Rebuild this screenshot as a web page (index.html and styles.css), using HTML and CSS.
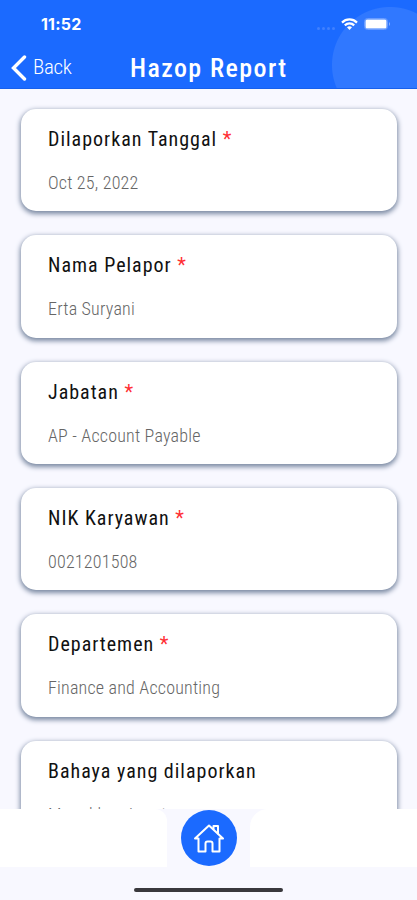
FILE: index.html
```html
<!DOCTYPE html>
<html lang="id">
<head>
<meta charset="utf-8">
<title>Hazop Report</title>
<link rel="stylesheet" href="styles.css">
</head>
<body>
<div class="screen">
  <header class="header">
    <div class="status">
      <span class="time">11:52</span>
      <span class="status-icons">
        <span class="signal"><i></i><i></i><i></i><i></i></span>
        <svg class="wifi" width="17" height="13" viewBox="0 0 17 13" fill="none" stroke="#fff" stroke-width="2.2"><path d="M1 4.6C5.2.4 11.8.4 16 4.6M3.8 7.4c2.7-2.7 6.7-2.7 9.4 0"/><path d="M6 9.3c1.4-1.3 3.6-1.3 5 0L8.500 12z" fill="#fff" stroke="none"/></svg>
        <svg class="battery" width="27" height="12" viewBox="0 0 27 12"><rect x=".5" y=".5" width="23" height="11" rx="3" fill="none" stroke="#6a9cff"/><rect x="1.500" y="1.500" width="21" height="9" rx="1.500" fill="#fff"/><path d="M25 4q2 2 0 4z" fill="#8db2ff"/></svg>
      </span>
    </div>
    <div class="nav">
      <a class="back"><svg width="16" height="26" viewBox="0 0 16 26" fill="none" stroke="#fff" stroke-width="3.4" stroke-linecap="round"><path d="M13.500 2 2.500 13l11 11"/></svg><span class="back-label">Back</span></a>
      <h1 class="title">Hazop Report</h1>
    </div>
  </header>
  <main class="list">
    <section class="card"><h2>Dilaporkan Tanggal <b>*</b></h2><p>Oct 25, 2022</p></section>
    <section class="card"><h2>Nama Pelapor <b>*</b></h2><p>Erta Suryani</p></section>
    <section class="card"><h2>Jabatan <b>*</b></h2><p>AP - Account Payable</p></section>
    <section class="card"><h2>NIK Karyawan <b>*</b></h2><p>0021201508</p></section>
    <section class="card"><h2>Departemen <b>*</b></h2><p>Finance and Accounting</p></section>
    <section class="card"><h2>Bahaya yang dilaporkan</h2><p class="entry">Masukkan input</p></section>
  </main>
  <footer class="tabbar">
    <div class="panel left"></div>
    <a class="home"><svg width="30" height="29" viewBox="0 0 30 29" fill="none" stroke="#fff" stroke-width="2" stroke-linejoin="round" stroke-linecap="round"><path d="M1 14.500 15 1.500l14 13h-3.500V27.500h-7v-8q0-2-2-2h-3q-2 0-2 2v8h-7v-13z"/><path d="M19.500 5V2H24v7.500"/></svg></a>
    <div class="panel right"></div>
    <div class="indicator"></div>
  </footer>
</div>
</body>
</html>
```
FILE: styles.css
```css
* { box-sizing: border-box; }
body { margin: 0; font-family: "Roboto Condensed", Roboto, sans-serif; font-stretch: 75%; }
.screen { width: 417px; height: 900px; display: flex; flex-direction: column; overflow: hidden; background: #f8f8ff; }
.header { flex: 0 0 89px; background: radial-gradient(circle at 390px 65px, #3078ff 57.5px, transparent 58.5px) #1b6aff; color: #fff; border-bottom: 1px solid #1760ec; }
.status { height: 48px; display: flex; justify-content: space-between; padding: 0 26px 0 41px; align-items: center; }
.time { font: 700 16px/20px Inter, sans-serif; letter-spacing: .2px; }
.status-icons { display: flex; align-items: center; }
.signal { display: flex; gap: 2px; margin: 8px 6px 0 0; }
.signal i { width: 3px; height: 3px; border-radius: 50%; background: #4080ff; }
.battery { margin-left: 6px; }
.nav { height: 40px; display: grid; grid-template-columns: 130px 1fr; align-items: center; }
.back { display: flex; align-items: center; padding-left: 11px; gap: 6px; }
.back-label { font-size: 21px; font-weight: 300; letter-spacing: -.3px; position: relative; top: -1px; }
.title { margin: 0; font-size: 26px; font-weight: 500; letter-spacing: 1.4px; line-height: 40px; }
.list { flex: 0 0 720px; overflow: hidden; padding: 20px 20px 0 21px; display: flex; flex-direction: column; gap: 24px; }
.card { flex: 0 0 102.35px; height: 102.35px; background: #fff; border-radius: 15px; padding: 17px 27px 0; box-shadow: 0 2px 5px 1px #7b8aa3; }
.card h2 { margin: 0; font-size: 20px; line-height: 26px; font-weight: 400; letter-spacing: 1px; color: #111; }
.card h2 b { color: #ff2f35; font-weight: 400; }
.card p { margin: 19px 0 0; font-size: 18px; line-height: 24px; font-weight: 300; letter-spacing: .2px; color: #666; }
.card .entry { letter-spacing: .6px; }
.tabbar { flex: 1; display: grid; grid-template-columns: 167px 83px 167px; grid-template-rows: 58px 1fr; background: #f8f8ff; }
.panel { background: #fff; }
.left { border-top-right-radius: 12px; }
.right { border-top-left-radius: 18px; }
.home { width: 56px; height: 56px; margin-top: 1px; border-radius: 50%; background: #1b6aff; display: flex; align-items: center; justify-content: center; justify-self: center; }
.indicator { grid-column: 1 / 4; justify-self: center; margin-top: 21px; width: 149px; height: 4px; border-radius: 2px; background: #39383d; }
```
